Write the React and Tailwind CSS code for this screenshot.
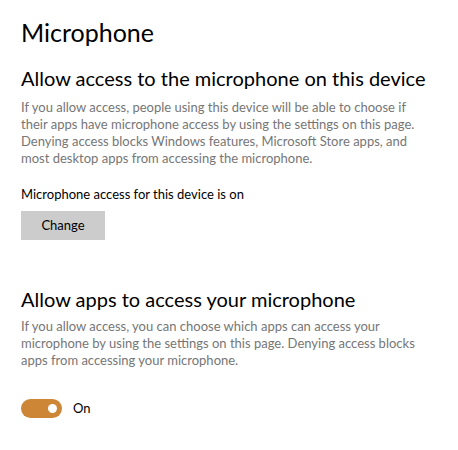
import React, { useState } from 'react';

const App = () => {
  const [appsOn, setAppsOn] = useState(true);

  return (
    <div
      className="w-[458px] h-[450px] bg-white px-[21px] pt-[14px] text-black"
      style={{ fontFamily: 'Lato, "Open Sans", sans-serif' }}
    >
      <h1 className="text-[25px] leading-[36px] font-normal">Microphone</h1>

      <h2 className="mt-[15px] text-[20px] leading-[26px] font-normal">
        Allow access to the microphone on this device
      </h2>
      <p className="mt-[8px] whitespace-nowrap text-[13px] leading-[17px] text-[#767676]">
        If you allow access, people using this device will be able to choose if
        <br />
        their apps have microphone access by using the settings on this page.
        <br />
        Denying access blocks Windows features, Microsoft Store apps, and
        <br />
        most desktop apps from accessing the microphone.
      </p>

      <div className="mt-[19px] text-[13px] leading-[17px]">
        Microphone access for this device is on
      </div>
      <button className="mt-[8px] w-[84px] h-[29px] bg-[#cccccc] text-[13px]">
        Change
      </button>

      <h2 className="mt-[46px] text-[20px] leading-[26px] font-normal">
        Allow apps to access your microphone
      </h2>
      <p className="mt-[6px] whitespace-nowrap text-[13px] leading-[17px] text-[#767676]">
        If you allow access, you can choose which apps can access your
        <br />
        microphone by using the settings on this page. Denying access blocks
        <br />
        apps from accessing your microphone.
      </p>

      <div className="mt-[30px] flex items-center gap-[11px]">
        <button
          onClick={() => setAppsOn(!appsOn)}
          className="w-[41px] h-[19px] rounded-full bg-[#cd8636] flex items-center justify-end pr-[5px]"
        >
          <span className="w-[9px] h-[9px] rounded-full bg-white" />
        </button>
        <span className="text-[13px]">On</span>
      </div>
    </div>
  );
};

export default App;
